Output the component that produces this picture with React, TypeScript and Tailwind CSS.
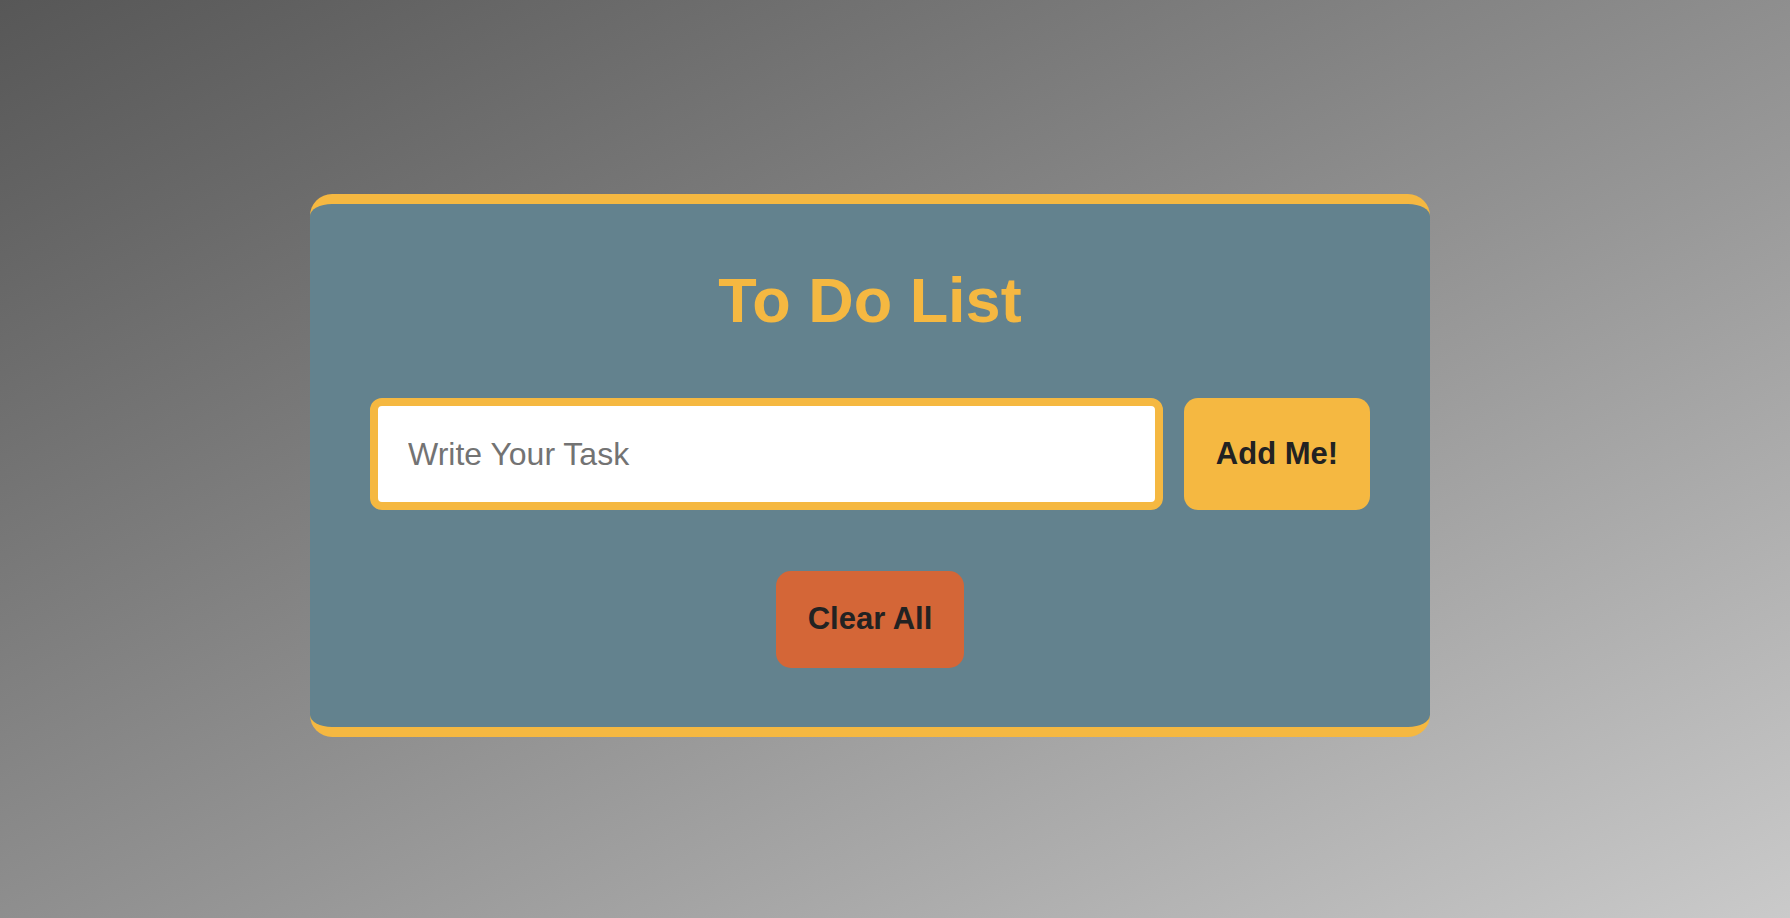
import { useState } from "react";

export default function App() {
  const [task, setTask] = useState("");

  return (
    <div
      className="min-h-screen w-full bg-gradient-to-br from-[#575757] to-[#cacaca] pt-[194px] pl-[310px]"
      style={{ fontFamily: '"Liberation Sans", Arial, sans-serif' }}
    >
      {/* Card */}
      <div className="w-[1120px] rounded-[22px] border-y-[10px] border-[#f5b841] bg-[#63828e] px-[60px] pt-[60px] pb-[59px] flex flex-col items-center">
        <h1 className="text-[63px] font-bold leading-[72px] text-[#f5b841] mb-[62px]">To Do List</h1>

        <div className="flex w-full gap-[21px] mb-[61px]">
          <input
            value={task}
            onChange={(e) => setTask(e.target.value)}
            placeholder="Write Your Task"
            className="flex-1 h-[112px] rounded-[12px] border-[8px] border-[#f5b841] bg-white px-[30px] text-[32px] text-[#222] placeholder:text-[#737373] outline-none"
          />
          <button className="w-[186px] h-[112px] rounded-[14px] bg-[#f5b841] text-[31px] font-bold text-[#222]">
            Add Me!
          </button>
        </div>

        <button className="w-[188px] h-[97px] rounded-[15px] bg-[#d46637] text-[31px] font-bold text-[#222]">
          Clear All
        </button>
      </div>
    </div>
  );
}
